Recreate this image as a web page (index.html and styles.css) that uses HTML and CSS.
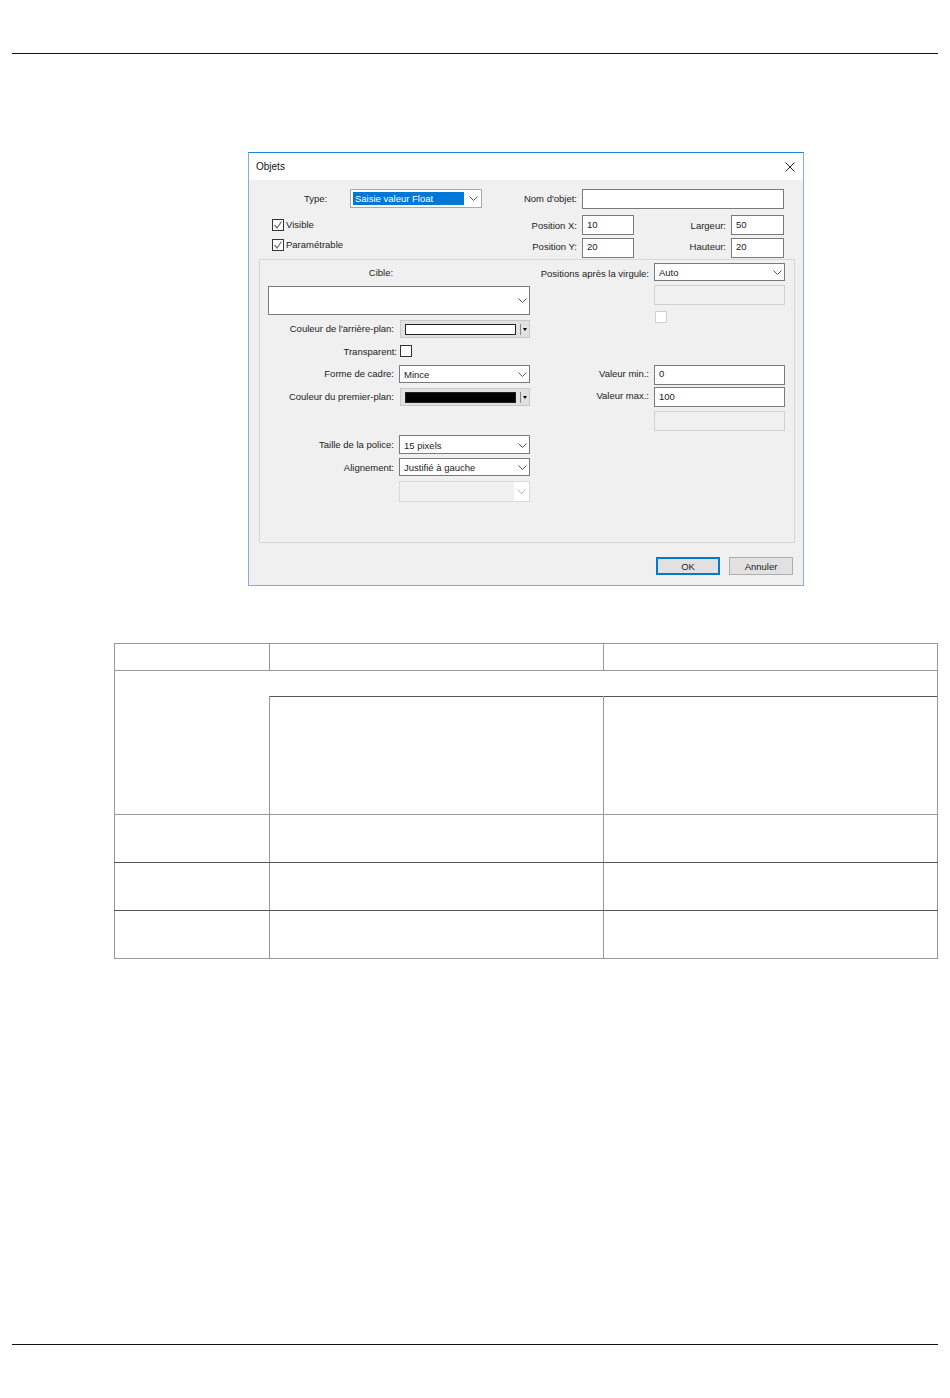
FILE: index.html
```html
<!DOCTYPE html>
<html lang="fr">
<head>
<meta charset="utf-8">
<title>Objets</title>
<link rel="stylesheet" href="styles.css">
</head>
<body>
<svg class="defs" width="0" height="0" aria-hidden="true">
  <symbol id="chev" viewBox="0 0 9 5"><path d="M.5.5l4 4 4-4" fill="none" stroke="currentColor"/></symbol>
  <symbol id="tick" viewBox="0 0 10 10"><path d="M1.5 5l2.5 3L8.5 1.5" fill="none" stroke="#6b6b6b" stroke-width="1.2"/></symbol>
</svg>
<header class="rule rule-top"></header>
<main>
  <section class="dialog">
    <div class="titlebar">
      <span>Objets</span>
      <svg class="close" viewBox="0 0 10 10"><path d="M.5.5l9 9M9.5.5l-9 9" fill="none" stroke="#222" stroke-width="1"/></svg>
    </div>
    <div class="top">
      <div class="type-row">
        <span class="type-label">Type:</span>
        <div class="select select-type"><span class="selected">Saisie valeur Float</span><svg class="chev"><use href="#chev"/></svg></div>
      </div>
      <label class="lbl">Nom d'objet:</label>
      <div class="input input-wide"></div>

      <div class="check-row"><span class="check"><svg class="tick"><use href="#tick"/></svg></span><span class="check-text">Visible</span></div>
      <label class="lbl lbl-down">Position X:</label>
      <div class="input input-down">10</div>
      <label class="lbl lbl-down">Largeur:</label>
      <div class="input input-down">50</div>

      <div class="check-row check-row-up"><span class="check"><svg class="tick"><use href="#tick"/></svg></span><span class="check-text">Paramétrable</span></div>
      <label class="lbl lbl-up">Position Y:</label>
      <div class="input">20</div>
      <label class="lbl lbl-up">Hauteur:</label>
      <div class="input">20</div>
    </div>

    <div class="group">
      <div class="col-left">
        <span class="cible-label">Cible:</span>
        <div class="select select-cible"><span></span><svg class="chev"><use href="#chev"/></svg></div>

        <label class="lbl lbl-left">Couleur de l'arrière-plan:</label>
        <div class="color"><span class="swatch"></span><span class="sep"></span><span class="tri"></span></div>

        <label class="lbl lbl-left lbl-transp">Transparent:</label>
        <span class="check check-solo"></span>

        <label class="lbl lbl-left">Forme de cadre:</label>
        <div class="select"><span>Mince</span><svg class="chev"><use href="#chev"/></svg></div>

        <label class="lbl lbl-left">Couleur du premier-plan:</label>
        <div class="color"><span class="swatch swatch-black"></span><span class="sep"></span><span class="tri"></span></div>

        <label class="lbl lbl-low">Taille de la police:</label>
        <div class="select select-h19"><span>15 pixels</span><svg class="chev"><use href="#chev"/></svg></div>

        <label class="lbl lbl-low">Alignement:</label>
        <div class="select"><span>Justifié à gauche</span><svg class="chev"><use href="#chev"/></svg></div>

        <span></span>
        <div class="select select-off"><span class="off-fill"></span><svg class="chev"><use href="#chev"/></svg></div>
      </div>

      <div class="col-right">
        <label class="lbl lbl-down">Positions après la virgule:</label>
        <div class="select"><span>Auto</span><svg class="chev"><use href="#chev"/></svg></div>

        <span></span>
        <div class="input input-off"></div>

        <span></span>
        <span class="check check-off"></span>

        <label class="lbl lbl-up">Valeur min.:</label>
        <div class="input">0</div>

        <label class="lbl lbl-up">Valeur max.:</label>
        <div class="input input-down">100</div>

        <span></span>
        <div class="input input-off"></div>
      </div>
    </div>

    <div class="footer">
      <button class="btn btn-default">OK</button>
      <button class="btn">Annuler</button>
    </div>
  </section>

  <table class="grid">
    <colgroup><col class="c1"><col class="c2"><col class="c3"></colgroup>
    <tr class="h-head"><td></td><td></td><td></td></tr>
    <tr class="h-sub"><td colspan="3" class="sub-cell"></td></tr>
    <tr class="h-tall"><td class="open-top"></td><td class="dark-top"></td><td class="dark-top"></td></tr>
    <tr class="h-row row-dark"><td></td><td></td><td></td></tr>
    <tr class="h-row row-dark"><td></td><td></td><td></td></tr>
    <tr class="h-row"><td></td><td></td><td></td></tr>
  </table>
</main>
<footer class="rule rule-bottom"></footer>
</body>
</html>
```

FILE: styles.css
```css
* { box-sizing: border-box; }
html, body { margin: 0; padding: 0; background: #fff; }
body {
  height: 1398px;
  overflow: hidden;
  font-family: "Liberation Sans", Arial, sans-serif;
  font-size: 9.5px;
  color: #222;
}
.defs { display: block; height: 0; }

.rule { height: 1px; margin: 0 12px; background: #111; }
.rule-top { margin-top: 53px; }
.rule-bottom { margin-top: 385px; }

.dialog {
  width: 556px;
  height: 434px;
  margin: 98px 0 0 248px;
  background: #f0f0f0;
  border: 1px solid #7fb0d6;
  border-top-color: #1a86d8;
}
.titlebar {
  height: 27px;
  padding: 0 8px 0 7px;
  background: #fff;
  display: flex;
  align-items: center;
  justify-content: space-between;
  font-size: 10px;
  color: #111;
}
.close { width: 10px; height: 10px; }

.top {
  display: grid;
  grid-template-columns: 271px 62px 52px 97px 53px;
  grid-template-rows: 26px 23px 21px;
  padding-top: 9px;
  height: 79px;
}
.type-row { display: flex; align-items: center; height: 19px; }
.type-label { width: 101px; padding-left: 55px; }
.lbl { text-align: right; padding-right: 5px; line-height: 20px; white-space: nowrap; }
.lbl-up { line-height: 18px; }
.lbl-down { line-height: 22px; }
.input {
  height: 20px;
  border: 1px solid #7a7a7a;
  background: #fff;
  padding-left: 4px;
  line-height: 16px;
  color: #222;
}
.input-down { line-height: 18px; }
.input-wide { grid-column: 3 / 6; }
.input-off { background: #f0f0f0; border-color: #d0d0d0; }

.check-row { display: flex; align-items: center; gap: 2px; padding: 4px 0 0 23px; height: 16px; }
.check-row-up { padding-top: 1px; height: 13px; }
.check-text { margin-bottom: 2px; }
.check {
  width: 12px;
  height: 12px;
  flex: none;
  display: block;
  border: 1px solid #333;
  background: #fff;
}
.tick { display: block; width: 10px; height: 10px; }

.select {
  height: 18px;
  border: 1px solid #7a7a7a;
  background: #fff;
  padding-left: 4px;
  display: flex;
  align-items: center;
  justify-content: space-between;
}
.chev { width: 9px; height: 5px; margin-right: 2px; flex: none; color: #555; }
.select-type { width: 132px; height: 19px; padding: 0 1px 0 2px; border-color: #a8a8a8; }
.selected { width: 111px; height: 13px; line-height: 13px; padding-left: 2px; background: #0078d7; color: #fff; }
.select-h19 { height: 19px; padding-top: 1px; }
.select-cible { grid-column: 1 / 3; height: 29px; margin-left: 8px; }
.select-off {
  height: 21px;
  padding: 0;
  background: #fff;
  border-color: #d9d9d9;
}
.select-off .chev { color: #bbb; margin-right: 3px; }
.off-fill { width: 114px; height: 19px; background: #f0f0f0; }

.group {
  width: 536px;
  height: 284px;
  margin-left: 10px;
  padding-top: 3px;
  border: 1px solid #d7d7d7;
  display: flex;
  align-items: flex-start;
}
.col-left {
  width: 270px;
  display: grid;
  grid-template-columns: 139px 131px;
  grid-template-rows: 23px 34px 25px 20px 23px 47px 23px 23px 21px;
  align-items: start;
}
.col-right {
  width: 255px;
  display: grid;
  grid-template-columns: 124px 131px;
  grid-template-rows: 22px 26px 54px 22px 24px 20px;
  align-items: start;
}
.cible-label { grid-column: 1 / 3; padding-right: 28px; text-align: center; line-height: 20px; }
.lbl-left { line-height: 17px; }
.lbl-low { line-height: 19px; }
.lbl-transp { padding-right: 2px; line-height: 13px; }
.check-solo { margin-left: 1px; }
.check-off { margin-left: 1px; border-color: #d0d0d0; }

.color {
  height: 18px;
  margin-left: 1px;
  background: #e1e1e1;
  border: 1px solid #c8c8c8;
  display: flex;
  align-items: center;
  padding-left: 4px;
}
.swatch { width: 111px; height: 11px; background: #fff; border: 1px solid #222; }
.swatch-black { background: #000; }
.sep { width: 1px; height: 11px; margin-left: 4px; background: #888; }
.tri {
  margin-left: 2px;
  border-left: 2.5px solid transparent;
  border-right: 2.5px solid transparent;
  border-top: 3px solid #000;
}

.footer {
  display: flex;
  justify-content: flex-end;
  gap: 9px;
  padding: 14px 10px 0 0;
}
.btn {
  width: 64px;
  height: 18px;
  padding: 1px 0 0;
  background: #e1e1e1;
  border: 1px solid #adadad;
  font: inherit;
  color: #222;
  line-height: 16px;
}
.btn-default { border: 2px solid #0078d7; line-height: 14px; }

.grid {
  border-collapse: collapse;
  table-layout: fixed;
  width: 823px;
  margin: 57px 0 0 114px;
}
.grid td { border: 1px solid #999; padding: 0; }
.c1 { width: 155px; }
.c2 { width: 334px; }
.c3 { width: 334px; }
.h-head { height: 27px; }
.h-sub { height: 26px; }
.h-tall { height: 118px; }
.h-row { height: 48px; }
.grid td.sub-cell { border-bottom: none; }
.grid td.open-top { border-top: none; }
.grid td.dark-top { border-top-color: #555; }
.row-dark td { border-bottom-color: #555; }
.grid .row-dark td { border-bottom-color: #555; }
```
